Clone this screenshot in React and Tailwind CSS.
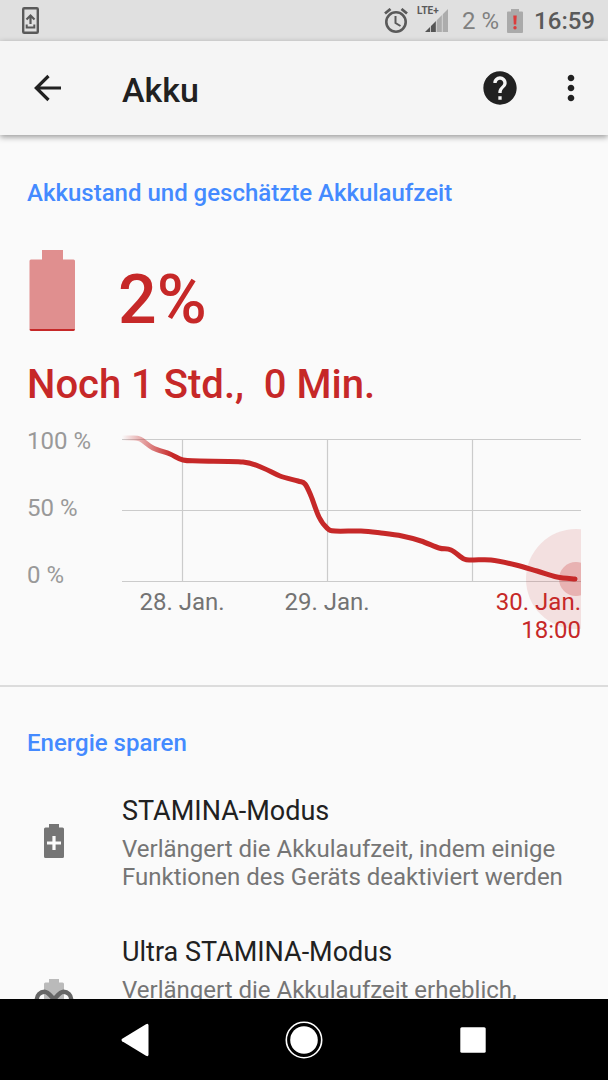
import React from 'react';
import { MdHelp, MdMoreVert } from 'react-icons/md';

// Battery level over time, in chart coordinates
const LEVELS = [
  [0, 11], [8, 11], [18, 12], [31, 21], [48, 27], [61, 33], [78, 34],
  [121, 35], [141, 41], [158, 49], [176, 54], [183, 57], [189, 69],
  [197, 90], [205, 101], [213, 104], [239, 104], [259, 106], [280, 109],
  [299, 114], [317, 121], [329, 123], [342, 132], [351, 133], [369, 133],
  [394, 138], [415, 144], [435, 150], [453, 152]
];

// Catmull-Rom spline through all points
const smoothPath = (points) => {
  let d = `M${points[0][0]} ${points[0][1]}`;
  for (let i = 0; i < points.length - 1; i++) {
    const p0 = points[i - 1] || points[i];
    const p1 = points[i];
    const p2 = points[i + 1];
    const p3 = points[i + 2] || p2;
    d += ` C${p1[0] + (p2[0] - p0[0]) / 6} ${p1[1] + (p2[1] - p0[1]) / 6}`;
    d += ` ${p2[0] - (p3[0] - p1[0]) / 6} ${p2[1] - (p3[1] - p1[1]) / 6}`;
    d += ` ${p2[0]} ${p2[1]}`;
  }
  return d;
};

const StatusBar = () => (
  <div className="flex h-[41px] shrink-0 items-center justify-between bg-[#e0e0e0] pl-[22px] pr-[13px] text-[#5a5a5a]">
    <svg width="17" height="27" viewBox="0 0 17 27" fill="none" stroke="currentColor">
      <rect x="1.2" y="1.2" width="14.6" height="24.6" rx="1" strokeWidth="2.4" />
      <path d="M8.5 17V9M4.5 12.5L8.5 8.5L12.5 12.5" strokeWidth="2.2" />
      <path d="M4.7 17.5V20.5H12.3V17.5" strokeWidth="2" />
    </svg>
    <div className="flex items-center">
      <svg width="24" height="25" viewBox="0 0 24 25" fill="none" stroke="currentColor">
        <circle cx="12" cy="14" r="9.7" strokeWidth="2.6" />
        <path d="M11.5 8V15L16.5 18" strokeWidth="2" />
        <path d="M1 5.5L6.5 1M17.5 1L23 5.5" strokeWidth="2.8" />
      </svg>
      <div className="relative ml-[17px]">
        <svg width="23" height="23" viewBox="0 0 23 23">
          <path d="M0 23L11 12V23Z" fill="#555" />
          <path d="M11 12L23 0V23H11Z" fill="#acacac" />
          <path d="M5.5 17V23M11.3 11V23M17.3 5V23" stroke="#e0e0e0" strokeWidth="0.8" />
        </svg>
        <span className="absolute -left-2 -top-1 text-[10px] leading-3 font-bold">LTE+</span>
      </div>
      <span className="ml-3.5 text-2xl leading-7 text-[#808080]">2 %</span>
      <svg className="ml-2" width="16" height="24" viewBox="0 0 16 24">
        <path d="M4 0H12V2.5H15Q16 2.5 16 3.5V23Q16 24 15 24H1Q0 24 0 23V3.5Q0 2.5 1 2.5H4Z" fill="#aaa" />
        <path d="M6.3 6.5H9.7L9.2 15.5H6.8Z" fill="#dc3c3c" />
        <circle cx="8" cy="18.7" r="1.7" fill="#dc3c3c" />
      </svg>
      <span className="ml-[11px] text-2xl leading-7 font-medium">16:59</span>
    </div>
  </div>
);

const AppBar = () => (
  <header className="z-10 flex h-[94px] shrink-0 items-center bg-[#f5f5f5] pl-[27px] pr-[17px] text-[#212121] shadow-[0_2px_6px_rgba(0,0,0,0.4)]">
    <button type="button" aria-label="Zurück">
      <svg width="40" height="40" viewBox="0 0 40 40" fill="none" stroke="currentColor" strokeWidth="3.2">
        <path d="M34 20H9M21.5 8L9.3 20L21.5 32" />
      </svg>
    </button>
    <h1 className="ml-[55px] flex-1 pt-1 text-[34px] leading-10 font-medium">Akku</h1>
    <button type="button" aria-label="Hilfe">
      <MdHelp className="size-10" />
    </button>
    <button type="button" aria-label="Weitere Optionen" className="ml-[31px]">
      <MdMoreVert className="size-10" />
    </button>
  </header>
);

const BatteryChart = () => (
  <div className="mt-[18px] flex items-start">
    <div className="flex w-[95px] shrink-0 flex-col gap-[39px] text-2xl leading-7 text-[#999]">
      <span>100 %</span>
      <span>50 %</span>
      <span>0 %</span>
    </div>
    <svg className="h-auto min-w-0 flex-1" viewBox="0 0 459 218" role="img" aria-label="Akkuverlauf">
      <defs>
        <linearGradient id="fade" gradientUnits="userSpaceOnUse" x1="0" y1="0" x2="459" y2="0">
          <stop offset="0" stopColor="#c62828" stopOpacity="0" />
          <stop offset="0.11" stopColor="#c62828" />
        </linearGradient>
      </defs>
      <path d="M0 12.5H459M0 83.5H459M0 154.5H459M60.5 12V155M205.5 12V155M350.5 12V155" stroke="#cbcbcb" strokeWidth="1.2" />
      <circle cx="454" cy="152" r="50" fill="#c62828" fillOpacity="0.12" />
      <circle cx="454" cy="152" r="17" fill="#c62828" fillOpacity="0.25" />
      <path d={smoothPath(LEVELS)} fill="none" stroke="url(#fade)" strokeWidth="5" strokeLinecap="round" />
      <g fontSize="24" fill="#737373" textAnchor="middle">
        <text x="60" y="183">28. Jan.</text>
        <text x="205" y="183">29. Jan.</text>
      </g>
      <g fontSize="24" fill="#c62828" textAnchor="end">
        <text x="459" y="183">30. Jan.</text>
        <text x="459" y="211">18:00</text>
      </g>
    </svg>
  </div>
);

const BatteryPlusIcon = () => (
  <svg width="40" height="40" viewBox="0 0 40 40">
    <path d="M15 3H25V6.5H28.5Q30 6.5 30 8V35.5Q30 37 28.5 37H11.5Q10 37 10 35.5V8Q10 6.5 11.5 6.5H15Z" fill="#757575" />
    <path d="M20 15V29M13 22H27" stroke="#fafafa" strokeWidth="3.2" />
  </svg>
);

const BatteryInfinityIcon = () => (
  <svg width="40" height="40" viewBox="0 0 40 40">
    <path d="M15 3H25V6.5H28.5Q30 6.5 30 8V35.5Q30 37 28.5 37H11.5Q10 37 10 35.5V8Q10 6.5 11.5 6.5H15Z" fill="#bababa" />
    <path
      d="M20 23.5C16 19 14 15.8 10.5 15.8A7.2 7.2 0 0 0 10.5 31.2C14 31.2 16 28 20 23.5C24 19 26 15.8 29.5 15.8A7.2 7.2 0 0 1 29.5 31.2C26 31.2 24 28 20 23.5Z"
      fill="none" stroke="#666" strokeWidth="4.4"
    />
  </svg>
);

const SettingItem = ({ icon, title, description }) => (
  <li className="flex items-center pb-[45px]">
    <div className="w-[88px] shrink-0 pb-1 pl-[7px]">{icon}</div>
    <div className="flex-1 pl-[7px]">
      <h3 className="text-[27px] leading-8 text-[#212121]">{title}</h3>
      <p className="mt-2 text-2xl leading-7 text-[#757575]">{description}</p>
    </div>
  </li>
);

const NavBar = () => (
  <nav className="grid h-[81px] shrink-0 grid-cols-3 place-items-center bg-black px-[51px] text-white">
    <button type="button" aria-label="Zurück">
      <svg width="38" height="38" viewBox="0 0 38 38" fill="currentColor">
        <path d="M6.2 17.8L30 3.2Q32.5 2 32.5 4.5V33.5Q32.5 36 30 34.8L6.2 20.2Q4.5 19 6.2 17.8Z" />
      </svg>
    </button>
    <button type="button" aria-label="Startseite">
      <svg width="38" height="38" viewBox="0 0 38 38">
        <circle cx="19" cy="19" r="17.7" fill="none" stroke="currentColor" strokeWidth="1.6" />
        <circle cx="19" cy="19" r="13.8" fill="currentColor" />
      </svg>
    </button>
    <button type="button" aria-label="Übersicht">
      <svg width="38" height="38" viewBox="0 0 38 38" fill="currentColor">
        <rect x="6.3" y="6.3" width="25.4" height="25.4" rx="1.5" />
      </svg>
    </button>
  </nav>
);

export default function App() {
  return (
    <div className="flex h-screen flex-col bg-[#fafafa] font-[Roboto,sans-serif]">
      <StatusBar />
      <AppBar />
      <main className="min-h-0 flex-1 overflow-y-auto [scrollbar-width:none]">
        <section className="border-b-2 border-[#dcdcdc] px-[27px] pt-11 pb-10 text-[#c62828]">
          <h2 className="text-2xl leading-7 font-medium text-[#448aff]">
            Akkustand und geschätzte Akkulaufzeit
          </h2>
          <div className="mt-[43px] flex items-end">
            <svg className="ml-0.5" width="46" height="81" viewBox="0 0 46 81">
              <path d="M13 0H34V9.5H44.5Q46 9.5 46 11V79H0.5V11Q0.5 9.5 2 9.5H13Z" fill="#e08f8f" />
              <path d="M0.5 79H46Q46 81 44.5 81H2Q0.5 81 0.5 79Z" fill="#c62828" />
            </svg>
            <span className="ml-[43px] text-[68px] leading-[62px] font-medium">2%</span>
          </div>
          <p className="mt-[30px] text-[40px] leading-[48px] font-medium whitespace-pre-wrap">
            {'Noch 1 Std.,  0 Min.'}
          </p>
          <BatteryChart />
        </section>
        <section className="px-[27px] pt-[42px]">
          <h2 className="text-2xl leading-7 font-medium text-[#448aff]">Energie sparen</h2>
          <ul className="mt-[38px]">
            <SettingItem
              icon={<BatteryPlusIcon />}
              title="STAMINA-Modus"
              description="Verlängert die Akkulaufzeit, indem einige Funktionen des Geräts deaktiviert werden"
            />
            <SettingItem
              icon={<BatteryInfinityIcon />}
              title="Ultra STAMINA-Modus"
              description="Verlängert die Akkulaufzeit erheblich, indem die meisten Funktionen des Geräts deaktiviert werden"
            />
          </ul>
        </section>
      </main>
      <NavBar />
    </div>
  );
}
